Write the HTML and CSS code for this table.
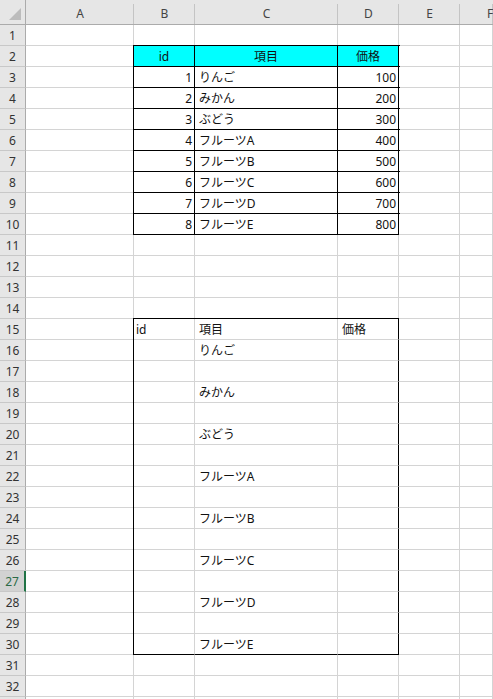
FILE: index.html
```html
<!DOCTYPE html>
<html lang="ja">
<head>
<meta charset="utf-8">
<link rel="stylesheet" href="styles.css">
</head>
<body>
<div class="sheet">
  <div class="corner"><span class="tri"></span></div>
  <div class="ch">A</div><div class="ch">B</div><div class="ch">C</div><div class="ch">D</div><div class="ch">E</div><div class="ch ch-f">F</div>

  <div class="rh">1</div><div class="c"></div><div class="c"></div><div class="c"></div><div class="c"></div><div class="c"></div><div class="c"></div>
  <div class="rh">2</div><div class="c"></div><div class="c t hd">id</div><div class="c t hd">項目</div><div class="c t hd">価格</div><div class="c"></div><div class="c"></div>
  <div class="rh">3</div><div class="c"></div><div class="c t r">1</div><div class="c t">りんご</div><div class="c t r">100</div><div class="c"></div><div class="c"></div>
  <div class="rh">4</div><div class="c"></div><div class="c t r">2</div><div class="c t">みかん</div><div class="c t r">200</div><div class="c"></div><div class="c"></div>
  <div class="rh">5</div><div class="c"></div><div class="c t r">3</div><div class="c t">ぶどう</div><div class="c t r">300</div><div class="c"></div><div class="c"></div>
  <div class="rh">6</div><div class="c"></div><div class="c t r">4</div><div class="c t">フルーツA</div><div class="c t r">400</div><div class="c"></div><div class="c"></div>
  <div class="rh">7</div><div class="c"></div><div class="c t r">5</div><div class="c t">フルーツB</div><div class="c t r">500</div><div class="c"></div><div class="c"></div>
  <div class="rh">8</div><div class="c"></div><div class="c t r">6</div><div class="c t">フルーツC</div><div class="c t r">600</div><div class="c"></div><div class="c"></div>
  <div class="rh">9</div><div class="c"></div><div class="c t r">7</div><div class="c t">フルーツD</div><div class="c t r">700</div><div class="c"></div><div class="c"></div>
  <div class="rh">10</div><div class="c"></div><div class="c t r">8</div><div class="c t">フルーツE</div><div class="c t r">800</div><div class="c"></div><div class="c"></div>
  <div class="rh">11</div><div class="c"></div><div class="c"></div><div class="c"></div><div class="c"></div><div class="c"></div><div class="c"></div>
  <div class="rh">12</div><div class="c"></div><div class="c"></div><div class="c"></div><div class="c"></div><div class="c"></div><div class="c"></div>
  <div class="rh">13</div><div class="c"></div><div class="c"></div><div class="c"></div><div class="c"></div><div class="c"></div><div class="c"></div>
  <div class="rh">14</div><div class="c"></div><div class="c"></div><div class="c"></div><div class="c"></div><div class="c"></div><div class="c"></div>
  <div class="rh">15</div><div class="c"></div><div class="c bt bl btl">id</div><div class="c bt">項目</div><div class="c bt br">価格</div><div class="c"></div><div class="c"></div>
  <div class="rh">16</div><div class="c"></div><div class="c bl"></div><div class="c">りんご</div><div class="c br"></div><div class="c"></div><div class="c"></div>
  <div class="rh">17</div><div class="c"></div><div class="c bl"></div><div class="c"></div><div class="c br"></div><div class="c"></div><div class="c"></div>
  <div class="rh">18</div><div class="c"></div><div class="c bl"></div><div class="c">みかん</div><div class="c br"></div><div class="c"></div><div class="c"></div>
  <div class="rh">19</div><div class="c"></div><div class="c bl"></div><div class="c"></div><div class="c br"></div><div class="c"></div><div class="c"></div>
  <div class="rh">20</div><div class="c"></div><div class="c bl"></div><div class="c">ぶどう</div><div class="c br"></div><div class="c"></div><div class="c"></div>
  <div class="rh">21</div><div class="c"></div><div class="c bl"></div><div class="c"></div><div class="c br"></div><div class="c"></div><div class="c"></div>
  <div class="rh">22</div><div class="c"></div><div class="c bl"></div><div class="c">フルーツA</div><div class="c br"></div><div class="c"></div><div class="c"></div>
  <div class="rh">23</div><div class="c"></div><div class="c bl"></div><div class="c"></div><div class="c br"></div><div class="c"></div><div class="c"></div>
  <div class="rh">24</div><div class="c"></div><div class="c bl"></div><div class="c">フルーツB</div><div class="c br"></div><div class="c"></div><div class="c"></div>
  <div class="rh">25</div><div class="c"></div><div class="c bl"></div><div class="c"></div><div class="c br"></div><div class="c"></div><div class="c"></div>
  <div class="rh">26</div><div class="c"></div><div class="c bl"></div><div class="c">フルーツC</div><div class="c br"></div><div class="c"></div><div class="c"></div>
  <div class="rh sel">27</div><div class="c"></div><div class="c bl"></div><div class="c"></div><div class="c br"></div><div class="c"></div><div class="c"></div>
  <div class="rh">28</div><div class="c"></div><div class="c bl"></div><div class="c">フルーツD</div><div class="c br"></div><div class="c"></div><div class="c"></div>
  <div class="rh">29</div><div class="c"></div><div class="c bl"></div><div class="c"></div><div class="c br"></div><div class="c"></div><div class="c"></div>
  <div class="rh">30</div><div class="c"></div><div class="c bl bb"></div><div class="c bb">フルーツE</div><div class="c br bb"></div><div class="c"></div><div class="c"></div>
  <div class="rh">31</div><div class="c"></div><div class="c"></div><div class="c"></div><div class="c"></div><div class="c"></div><div class="c"></div>
  <div class="rh">32</div><div class="c"></div><div class="c"></div><div class="c"></div><div class="c"></div><div class="c"></div><div class="c"></div>
  <div class="rh"></div><div class="c"></div><div class="c"></div><div class="c"></div><div class="c"></div><div class="c"></div><div class="c"></div>
</div>
</body>
</html>
```

FILE: styles.css
```css
html, body {
  margin: 0;
  padding: 0;
  background: #fff;
  overflow: hidden;
}
.sheet {
  display: grid;
  grid-template-columns: 26px 108px 61px 143px 61px 61px 1fr;
  grid-template-rows: 25px;
  grid-auto-rows: 21px;
  width: 100%;
  height: 100vh;
  overflow: hidden;
}
.sheet > div {
  box-sizing: border-box;
}
.corner {
  background: #e6e6e6;
  border-right: 1px solid #ababab;
  border-bottom: 1px solid #ababab;
  position: relative;
}
.tri {
  position: absolute;
  right: 4px;
  bottom: 4px;
  width: 0;
  height: 0;
  border-left: 12px solid transparent;
  border-bottom: 12px solid #bcbcbc;
}
.ch {
  background: linear-gradient(#c4c4c4, #c4c4c4) right 4px / 1px 20px no-repeat, #e6e6e6;
  border-bottom: 1px solid #ababab;
  display: flex;
  align-items: center;
  justify-content: center;
  padding-top: 3px;
  font: 12px "Noto Sans", "DejaVu Sans", sans-serif;
  color: #444;
}
.ch.ch-f {
  justify-content: flex-start;
  padding-left: 27px;
  overflow: hidden;
}
.rh {
  background: #e6e6e6;
  border-right: 1px solid #ababab;
  border-bottom: 1px solid #c8c8c8;
  display: flex;
  align-items: center;
  justify-content: center;
  font: 12px "Noto Sans", "DejaVu Sans", sans-serif;
  color: #333;
}
.rh.sel {
  background: #d2d2d2;
  border-right: 2px solid #217346;
  color: #2b6a46;
}
.c {
  background: #fff;
  border-right: 1px solid #d4d4d4;
  border-bottom: 1px solid #d4d4d4;
  display: flex;
  align-items: center;
  padding: 0 3px 0 4px;
  font: 12px "Noto Sans", "Noto Sans CJK JP", sans-serif;
  color: #111;
  white-space: nowrap;
  overflow: hidden;
}
.t {
  border-right-color: #000;
  border-bottom-color: #000;
  box-shadow: 0 0 0 1px #000;
}
.hd {
  background: #00ffff;
  justify-content: center;
  padding: 0;
}
.r {
  justify-content: flex-end;
  padding-right: 2px;
}
.bl {
  box-shadow: -1px 0 0 #000;
  padding-left: 2px;
}
.bt {
  box-shadow: 0 -1px 0 #000;
}
.bt.bl.btl {
  box-shadow: -1px -1px 0 #000, -1px 0 0 #000, 0 -1px 0 #000;
}
.br {
  border-right-color: #000;
}
.bb {
  border-bottom-color: #000;
}
```
